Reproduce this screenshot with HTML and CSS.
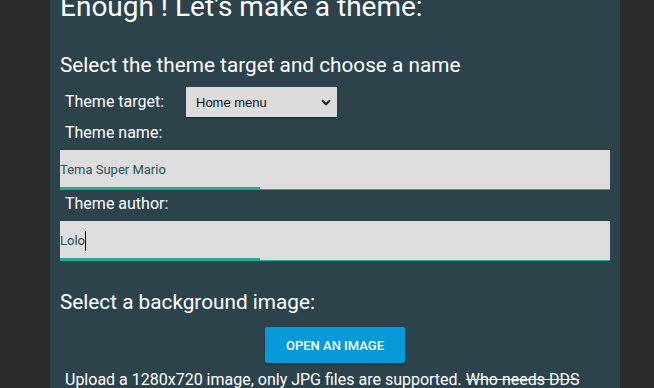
FILE: index.html
```html
<!DOCTYPE html>
<html lang="en">
<head>
    <meta charset="UTF-8">
    <title>Theme maker</title>
    <link rel="stylesheet" href="styles.css">
</head>
<body>
    <div class="panel">
        <h1 class="title">Enough ! Let's make a theme:</h1>

        <h2 class="section">Select the theme target and choose a name</h2>
        <div class="target-row">
            <label class="label" for="target">Theme target:</label>
            <select id="target" class="target-select">
                <option>Home menu</option>
                <option>Lock screen</option>
                <option>User page</option>
            </select>
        </div>

        <label class="label" for="name">Theme name:</label>
        <input id="name" class="field" type="text" value="Tema Super Mario">

        <label class="label" for="author">Theme author:</label>
        <div class="field author-field">
            <input id="author" class="field-input" type="text" value="Lolo" autofocus>
        </div>

        <h2 class="section bg-title">Select a background image:</h2>
        <div class="open-row">
            <button class="open-btn">Open an image</button>
        </div>
        <p class="hint">Upload a 1280x720 image, only JPG files are supported. <s>Who needs DDS</s> anyway?</p>
    </div>
</body>
</html>
```

FILE: styles.css
```css
body {
    margin: 0;
    background-color: #2b2b2b;
    font-family: Roboto, "Liberation Sans", sans-serif;
    color: #ffffff;
    overflow: hidden;
}
.panel {
    width: 550px;
    margin-left: 50px;
    margin-top: -10px;
    padding: 0 10px 40px 10px;
    background-color: #2d434c;
}
.title {
    margin: 0;
    font-size: 28px;
    font-weight: 400;
    line-height: 34px;
}
.section {
    margin: 0;
    font-size: 20.75px;
    font-weight: 400;
    line-height: 27px;
}
.title + .section {
    margin-top: 28px;
}
.target-row {
    display: flex;
    align-items: center;
    margin-top: 8px;
}
.label {
    display: block;
    padding-left: 5px;
    font-size: 16px;
    line-height: 22px;
}
.target-row .label {
    width: 121px;
}
.target-select {
    appearance: none;
    -webkit-appearance: none;
    width: 151px;
    height: 30px;
    padding: 0 10px;
    border: none;
    border-radius: 0;
    box-shadow: 0 1px 1px rgba(0, 0, 0, 0.35);
    background: #dcdcdc url("data:image/svg+xml;utf8,<svg xmlns='http://www.w3.org/2000/svg' width='10' height='7' viewBox='0 0 10 7'><path d='M1 1.2 5 5.2 9 1.2' fill='none' stroke='%23222' stroke-width='2.2'/></svg>") no-repeat right 6px center;
    font-family: Arial, "Liberation Sans", sans-serif;
    font-size: 13px;
    color: #111111;
}
.target-row + .label {
    margin-top: 5px;
}
.field {
    display: block;
    box-sizing: border-box;
    width: 100%;
    height: 40px;
    margin: 6px 0 3px 0;
    padding: 0;
    border: none;
    border-bottom: 1px solid #1eae92;
    background: #dddddd linear-gradient(#1eae92, #1eae92) no-repeat left bottom / 200px 2px;
    font-family: Roboto, "Liberation Sans", sans-serif;
    font-size: 13px;
    color: #2f5052;
    outline: none;
}
.author-field {
    display: flex;
    align-items: center;
}
.field-input {
    width: 25px;
    height: 20px;
    padding: 0;
    border: none;
    border-right: 1px solid #111111;
    background: transparent;
    font-family: Roboto, "Liberation Sans", sans-serif;
    font-size: 13px;
    color: #2f5052;
    outline: none;
}
.bg-title {
    margin-top: 28px;
}
.open-row {
    display: flex;
    justify-content: center;
    margin-top: 11px;
}
.open-btn {
    height: 36px;
    padding: 0 21px;
    border: none;
    border-radius: 2px;
    background-color: #069ad8;
    box-shadow: 0 2px 2px rgba(0, 0, 0, 0.25);
    color: #ffffff;
    font-family: Roboto, "Liberation Sans", sans-serif;
    font-size: 13px;
    font-weight: 500;
    text-transform: uppercase;
}
.hint {
    margin: 6px 0 0 0;
    padding-left: 5px;
    font-size: 16px;
    line-height: 22px;
}
```
